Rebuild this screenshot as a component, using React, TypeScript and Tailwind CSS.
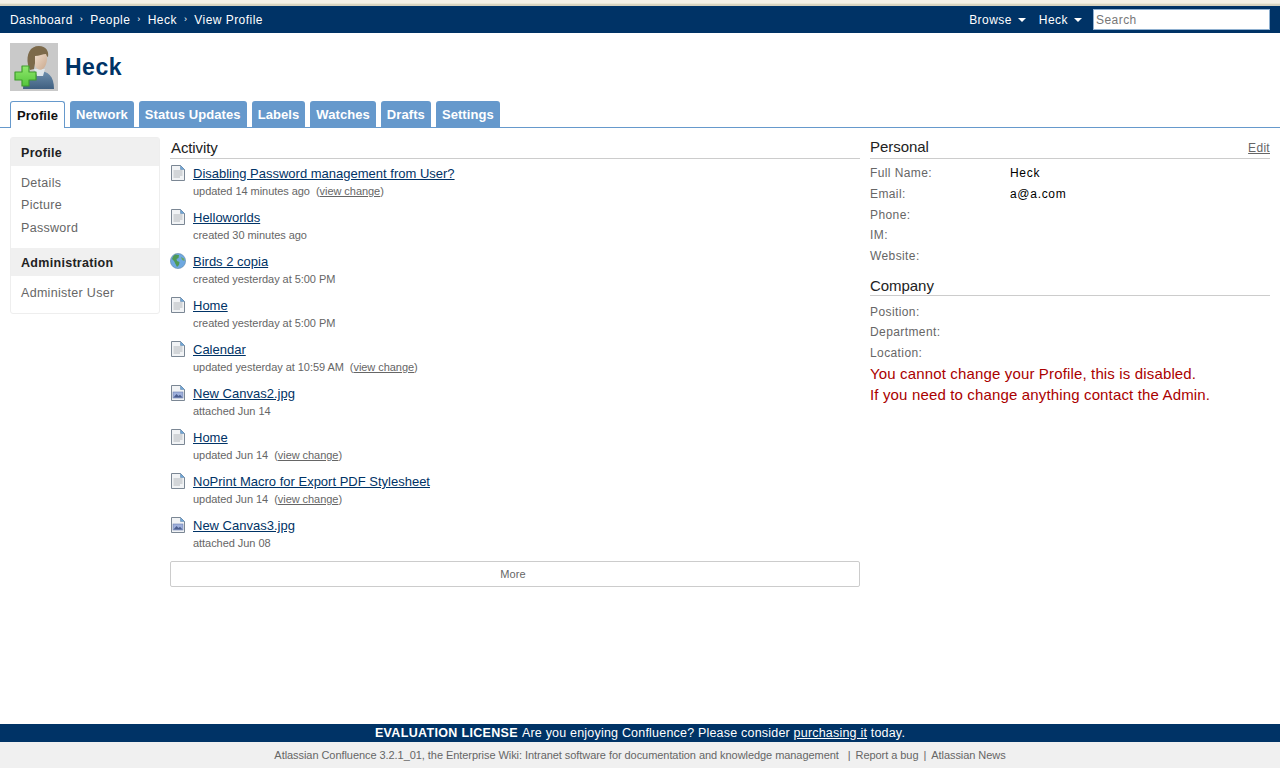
// App.tsx
import React from "react"

type IconKind = "page" | "globe" | "image"

const activity: { icon: IconKind; title: string; sub: string; change?: boolean }[] = [
  { icon: "page", title: "Disabling Password management from User?", sub: "updated 14 minutes ago", change: true },
  { icon: "page", title: "Helloworlds", sub: "created 30 minutes ago" },
  { icon: "globe", title: "Birds 2 copia", sub: "created yesterday at 5:00 PM" },
  { icon: "page", title: "Home", sub: "created yesterday at 5:00 PM" },
  { icon: "page", title: "Calendar", sub: "updated yesterday at 10:59 AM", change: true },
  { icon: "image", title: "New Canvas2.jpg", sub: "attached Jun 14" },
  { icon: "page", title: "Home", sub: "updated Jun 14", change: true },
  { icon: "page", title: "NoPrint Macro for Export PDF Stylesheet", sub: "updated Jun 14", change: true },
  { icon: "image", title: "New Canvas3.jpg", sub: "attached Jun 08" },
]

const tabs = ["Network", "Status Updates", "Labels", "Watches", "Drafts", "Settings"]

function PageIcon({ kind }: { kind: IconKind }) {
  if (kind === "globe") {
    return (
      <svg width="16" height="16" viewBox="0 0 16 16">
        <circle cx="8" cy="8" r="7.6" fill="#6ea8e0" stroke="#5f87a8" strokeWidth="0.6" />
        <path d="M5 1.5 L9 2 L8.5 5 L6.5 6 L7 8 L9.5 9 L9 12 L7 14 L5.5 11 L4 8 L2 6 L3 3.5 Z" fill="#4f9a55" />
        <path d="M11 4 L14 5.5 L14.5 8 L12 7 Z" fill="#6aa964" />
      </svg>
    )
  }
  return (
    <svg width="16" height="16" viewBox="0 0 16 16">
      <path d="M1.5 0.5 H10.5 L14.5 4.5 V15.5 H1.5 Z" fill="#f1f3f5" stroke="#7b8794" />
      <path d="M10.5 0.5 V4.5 H14.5 Z" fill="#6ea6d8" stroke="#6c8fb0" strokeWidth="0.6" />
      {kind === "page" ? (
        <path d="M3.5 6 H12.5 M3.5 8 H12.5 M3.5 10 H12.5 M3.5 12 H10" stroke="#b4b8bc" strokeWidth="1.2" />
      ) : (
        <>
          <rect x="3" y="7" width="10" height="6" fill="#9fb0dc" stroke="#6c7fae" strokeWidth="0.6" />
          <path d="M3.5 12.5 L6.5 9 L8.5 11 L10 9.8 L12.5 12.5 Z" fill="#4c5f8f" />
        </>
      )}
    </svg>
  )
}

function Avatar() {
  return (
    <svg width="48" height="48" viewBox="0 0 48 48" className="shrink-0">
      <defs>
        <linearGradient id="body" x1="0" y1="0" x2="0" y2="1">
          <stop offset="0" stopColor="#6f90ae" />
          <stop offset="1" stopColor="#3f5f80" />
        </linearGradient>
        <linearGradient id="skin" x1="0" y1="0" x2="1" y2="1">
          <stop offset="0" stopColor="#efdccb" />
          <stop offset="1" stopColor="#c9a88d" />
        </linearGradient>
        <linearGradient id="plus" x1="0" y1="0" x2="0" y2="1">
          <stop offset="0" stopColor="#8fe86c" />
          <stop offset="1" stopColor="#55c53c" />
        </linearGradient>
      </defs>
      <rect width="48" height="48" fill="#c9c9c9" />
      <path d="M13 46 C13 33 20 28 29 28 C38 28 44 33 44 46 Z" fill="url(#body)" />
      <path d="M24 26 L35 26 L33 33 L27 33 Z" fill="#dfe6ea" />
      <path d="M18 22 C16 11 20 3 29 3 C36 3 39 8 38 14 L35 12 L26 14 L24 26 L20 27 Z" fill="#7d6a4a" />
      <path d="M25 13 C29 13 33 11 36 11 C38 15 37 21 34 25 C31 28 27 27 25 23 Z" fill="url(#skin)" />
      <path d="M12 23 H19 V29 H26 V37 H19 V43 H12 V37 H5 V29 H12 Z" fill="url(#plus)" stroke="#3f9c2d" strokeWidth="1.2" strokeLinejoin="round" />
    </svg>
  )
}

function Caret() {
  return <span className="ml-[6px] mt-[1px] inline-block border-x-[4px] border-t-[4px] border-x-transparent border-t-white" />
}

function Crumb({ children }: { children: React.ReactNode }) {
  return (
    <>
      <span>{children}</span>
      <span className="mx-[7px] text-[9px] leading-none">›</span>
    </>
  )
}

function Field({ label, value }: { label: string; value?: string }) {
  return (
    <div className="flex h-[20.7px] items-center">
      <span className="w-[140px] text-[#666666]">{label}</span>
      {value && <span className="tracking-[0.7px] text-black">{value}</span>}
    </div>
  )
}

export default function App() {
  return (
    <div className="flex h-[768px] w-[1280px] flex-col overflow-hidden bg-white font-['Liberation_Sans',Arial,sans-serif] text-[12px] tracking-[0.4px]">
      <div className="h-[6px] border-t-[3px] border-b-[2px] border-t-[#f4f1e6] border-b-[#d8d4c0] bg-[#ece9d8]" />

      {/* top nav */}
      <div className="flex h-[27px] items-center justify-between bg-[#003366] pl-[10px] pr-[10px] tracking-[0.45px] text-white">
        <div className="flex items-center">
          <Crumb>Dashboard</Crumb>
          <Crumb>People</Crumb>
          <Crumb>Heck</Crumb>
          <span>View Profile</span>
        </div>
        <div className="flex items-center">
          <span>Browse</span>
          <Caret />
          <span className="ml-[13px]">Heck</span>
          <Caret />
          <input
            readOnly
            placeholder="Search"
            className="ml-[11px] h-[21px] w-[177px] border border-[#8fb0d0] bg-white px-[2px] text-[12px] text-black outline-none placeholder:text-[#777777]"
          />
        </div>
      </div>

      {/* profile header */}
      <div className="flex items-center gap-[7px] pl-[10px] pt-[10px]">
        <Avatar />
        <h1 className="text-[23px] font-bold leading-none tracking-[0.5px] text-[#003366]">Heck</h1>
      </div>

      {/* tabs */}
      <div className="mt-[10px] flex h-[27px] gap-[5px] border-b border-[#6699cc] pl-[10px] text-[13px] font-bold tracking-[0.08px]">
        <div className="z-10 flex h-[27px] w-[55px] items-center justify-center rounded-t-[3px] border border-b-0 border-[#6699cc] bg-white pt-[1px] text-[#111111]">
          Profile
        </div>
        {tabs.map((tab) => (
          <div key={tab} className="flex h-[26px] items-center rounded-t-[3px] bg-[#6699cc] px-[6px] pt-[1px] text-white">
            {tab}
          </div>
        ))}
      </div>

      {/* main */}
      <div className="flex flex-1 items-start gap-[10px] pl-[10px] pr-[10px] pt-[9px]">
        <div className="h-[177px] w-[150px] shrink-0 rounded-[3px] border border-[#eeeeee] text-[12.5px] tracking-[0.3px] text-[#666666]">
          <div className="flex h-[28px] items-center bg-[#f0f0f0] px-[10px] pt-[3px] font-bold text-[#222222]">Profile</div>
          <div className="flex h-[82px] flex-col justify-center gap-[6px] px-[10px] pb-[3px] leading-[16.5px]">
            <div>Details</div>
            <div>Picture</div>
            <div>Password</div>
          </div>
          <div className="flex h-[28px] items-center bg-[#f0f0f0] px-[10px] pt-[3px] font-bold text-[#222222]">Administration</div>
          <div className="px-[10px] pt-[9px] leading-[16px]">Administer User</div>
        </div>

        <div className="w-[690px] shrink-0">
          <div className="flex h-[22px] items-center border-b border-[#cccccc] pl-[1px] pt-[1px] text-[15px] tracking-[-0.1px] text-[#222222]">
            Activity
          </div>
          <div className="pt-[6px]">
            {activity.map((item, i) => (
              <div key={i} className="flex h-[44px] items-start">
                <div className="w-[23px] shrink-0">
                  <PageIcon kind={item.icon} />
                </div>
                <div>
                  <div className="h-[17px] text-[13px] leading-[17px] tracking-[0px] text-[#003366] underline">{item.title}</div>
                  <div className="mt-[2px] text-[11px] leading-[15px] tracking-[-0.05px] text-[#666666]">
                    {item.sub}
                    {item.change && (
                      <span className="ml-[6px]">
                        (<span className="underline">view change</span>)
                      </span>
                    )}
                  </div>
                </div>
              </div>
            ))}
          </div>
          <div className="flex h-[26px] items-center justify-center rounded-[2px] border border-[#cccccc] pr-[4px] text-[11px] tracking-[0.1px] text-[#666666]">
            More
          </div>
        </div>

        <div className="flex-1">
          <div className="flex h-[22px] items-center justify-between border-b border-[#cccccc] text-[15px] tracking-[-0.05px] text-[#222222]">
            <span>Personal</span>
            <span className="text-[12px] tracking-[0.3px] text-[#666666] underline">Edit</span>
          </div>
          <div className="pt-[4px]">
            <Field label="Full Name:" value="Heck" />
            <Field label="Email:" value="a@a.com" />
            <Field label="Phone:" />
            <Field label="IM:" />
            <Field label="Website:" />
          </div>
          <div className="mt-[8px] flex h-[22px] items-center border-b border-[#cccccc] pt-[2px] text-[15px] tracking-[-0.05px] text-[#222222]">
            Company
          </div>
          <div className="pt-[5px]">
            <Field label="Position:" />
            <Field label="Department:" />
            <Field label="Location:" />
          </div>
          <div className="-mt-[1px] text-[15px] leading-[21px] tracking-[0.15px] text-[#aa0000]">
            <div>You cannot change your Profile, this is disabled.</div>
            <div>If you need to change anything contact the Admin.</div>
          </div>
        </div>
      </div>

      {/* footer */}
      <div className="flex h-[18px] items-center justify-center bg-[#003366] text-[12.5px] tracking-[0.2px] text-white">
        <b className="tracking-[0.33px]">EVALUATION LICENSE</b>
        <span className="ml-[4px]">
          Are you enjoying Confluence? Please consider <span className="underline">purchasing it</span> today.
        </span>
      </div>
      <div className="flex h-[26px] items-center justify-center bg-[#f0f0f0] text-[11px] tracking-[-0.06px] text-[#666666]">
        <span>Atlassian Confluence 3.2.1_01, the Enterprise Wiki: Intranet software for documentation and knowledge management</span>
        <span className="ml-[9px]">|</span>
        <span className="ml-[5px]">Report a bug</span>
        <span className="ml-[5px]">|</span>
        <span className="ml-[5px]">Atlassian News</span>
      </div>
    </div>
  )
}
